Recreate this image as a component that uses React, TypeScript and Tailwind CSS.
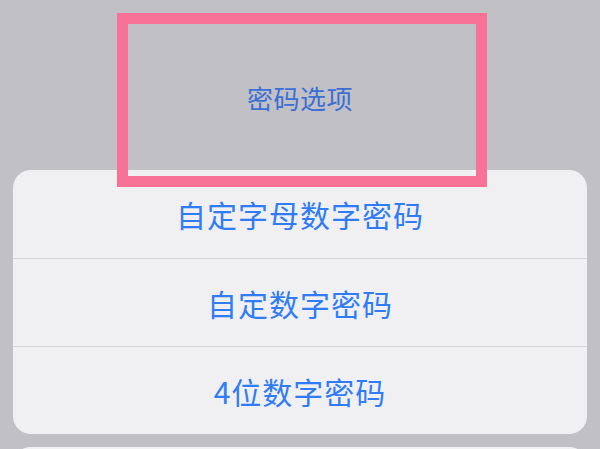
const options = ['自定字母数字密码', '自定数字密码', '4位数字密码'];

export default function App() {
  return (
    <div
      className="relative w-[600px] h-[449px] overflow-hidden bg-[#c1c0c5]"
      style={{ fontFamily: '"Noto Sans CJK SC", "Noto Sans", sans-serif' }}
    >
      <div className="flex flex-col px-[13px]">
        <div className="h-[170px] flex items-center justify-center pt-[26px]">
          <span className="text-[26px] leading-none text-[#3b6fd6] tracking-[0.5px]">密码选项</span>
        </div>
        <div className="rounded-[18px] bg-[#f0f0f2] overflow-hidden">
          {options.map((label, i) => (
            <div
              key={label}
              className={`h-[88px] flex items-center justify-center ${i > 0 ? 'border-t border-[#d5d5d8]' : ''}`}
            >
              <span className="text-[30px] leading-none text-[#2f7cf6] tracking-[1px]">{label}</span>
            </div>
          ))}
        </div>
        <div className="mt-[13px] h-[40px] rounded-[18px] bg-[#f0f0f2]" />
      </div>

      {/* annotation box */}
      <div className="absolute left-[117px] top-[13px] w-[370px] h-[174px] border-[11px] border-[#f87196]" />
    </div>
  );
}
